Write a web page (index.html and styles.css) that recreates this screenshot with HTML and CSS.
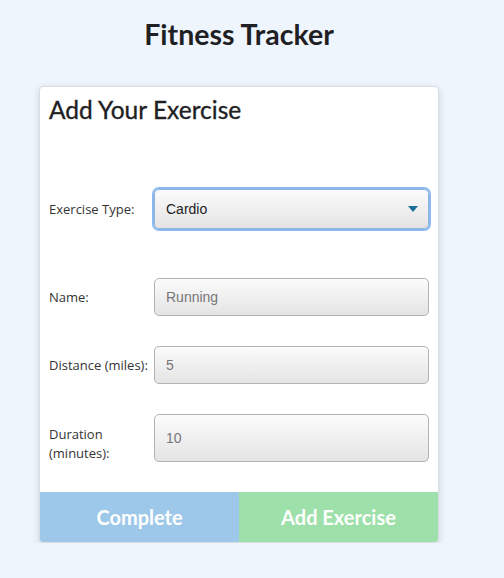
FILE: index.html
```html
<!DOCTYPE html>
<html>
<head>
<meta charset="utf-8">
<link rel="stylesheet" href="styles.css">
</head>
<body>
<div class="page">
  <h1 class="title">Fitness Tracker</h1>
  <div class="card">
    <div class="card-body">
      <h2 class="card-title">Add Your Exercise</h2>
      <div class="row row-type">
        <label class="label">Exercise Type:</label>
        <div class="select-wrap">
          <select class="control select">
            <option>Cardio</option>
            <option>Resistance</option>
          </select>
          <svg class="arrow" width="10" height="6" viewBox="0 0 10 6"><path d="M0 0 L10 0 L5 6 Z" fill="#1d6f9c"/></svg>
        </div>
      </div>
      <div class="row row-name">
        <label class="label">Name:</label>
        <input class="control input" type="text" placeholder="Running">
      </div>
      <div class="row row-dist">
        <label class="label">Distance (miles):</label>
        <input class="control input" type="text" placeholder="5">
      </div>
      <div class="row row-dur">
        <label class="label label-dur">Duration (minutes):</label>
        <input class="control input input-tall" type="text" placeholder="10">
      </div>
    </div>
    <div class="actions">
      <button class="btn btn-complete">Complete</button>
      <button class="btn btn-add">Add Exercise</button>
    </div>
  </div>
</div>
</body>
</html>
```

FILE: styles.css
```css
html, body {
  margin: 0;
  padding: 0;
  background: #eef5fd;
}
.page {
  width: 400px;
  margin-left: 39px;
  padding-top: 16px;
}
.title {
  margin: 0;
  text-align: center;
  font-family: Lato, "Liberation Sans", sans-serif;
  font-weight: 700;
  font-size: 28.5px;
  line-height: 36px;
  color: #1f1f24;
}
.card {
  margin-top: 34px;
  background: #fff;
  border: 1px solid #d9dde2;
  border-radius: 4px;
  box-shadow: 0 2px 7px rgba(0, 0, 0, 0.14);
  overflow: hidden;
}
.card-body {
  padding: 8px 9px 30px 9px;
}
.card-title {
  margin: 0;
  font-family: Lato, "Liberation Sans", sans-serif;
  font-weight: 400;
  font-size: 24.5px;
  line-height: 30px;
  color: #1f1f24;
  -webkit-text-stroke: 0.35px #1f1f24;
}
.row {
  display: grid;
  grid-template-columns: 105px 275px;
  align-items: center;
}
.row-type { margin-top: 64px; grid-template-rows: 40px; }
.row-name { margin-top: 49px; grid-template-rows: 38px; }
.row-dist { margin-top: 30px; grid-template-rows: 38px; }
.row-dur { margin-top: 30px; grid-template-rows: 48px; }
.label {
  font-family: "Open Sans", "Noto Sans", sans-serif;
  font-size: 13px;
  line-height: 19px;
  color: #333;
}
.label-dur {
  align-self: start;
  padding-top: 11px;
}
.select-wrap {
  position: relative;
  height: 40px;
}
.control {
  box-sizing: border-box;
  width: 275px;
  margin: 0;
  border: 1px solid #b2b2b2;
  border-radius: 5px;
  background: linear-gradient(#fbfbfb, #e4e4e4);
  font-family: "Liberation Sans", Arial, sans-serif;
  font-size: 14px;
  padding: 0 0 0 11px;
  outline: none;
}
.select {
  -webkit-appearance: none;
  appearance: none;
  height: 40px;
  color: #222;
  border-color: #8eb3dc;
  box-shadow: 0 0 0 2px #8dbaec;
}
.arrow {
  position: absolute;
  right: 11px;
  top: 17px;
}
.input {
  height: 38px;
  color: #777;
}
.input::placeholder {
  color: #777;
}
.input-tall {
  height: 48px;
}
.actions {
  display: grid;
  grid-template-columns: 1fr 1fr;
  height: 50px;
}
.btn {
  border: none;
  margin: 0;
  padding: 0;
  font-family: Lato, "Liberation Sans", sans-serif;
  font-weight: 700;
  font-size: 20px;
  color: #fff;
}
.btn-complete { background: #9dc8ea; }
.btn-add { background: #9de0a9; }
```
